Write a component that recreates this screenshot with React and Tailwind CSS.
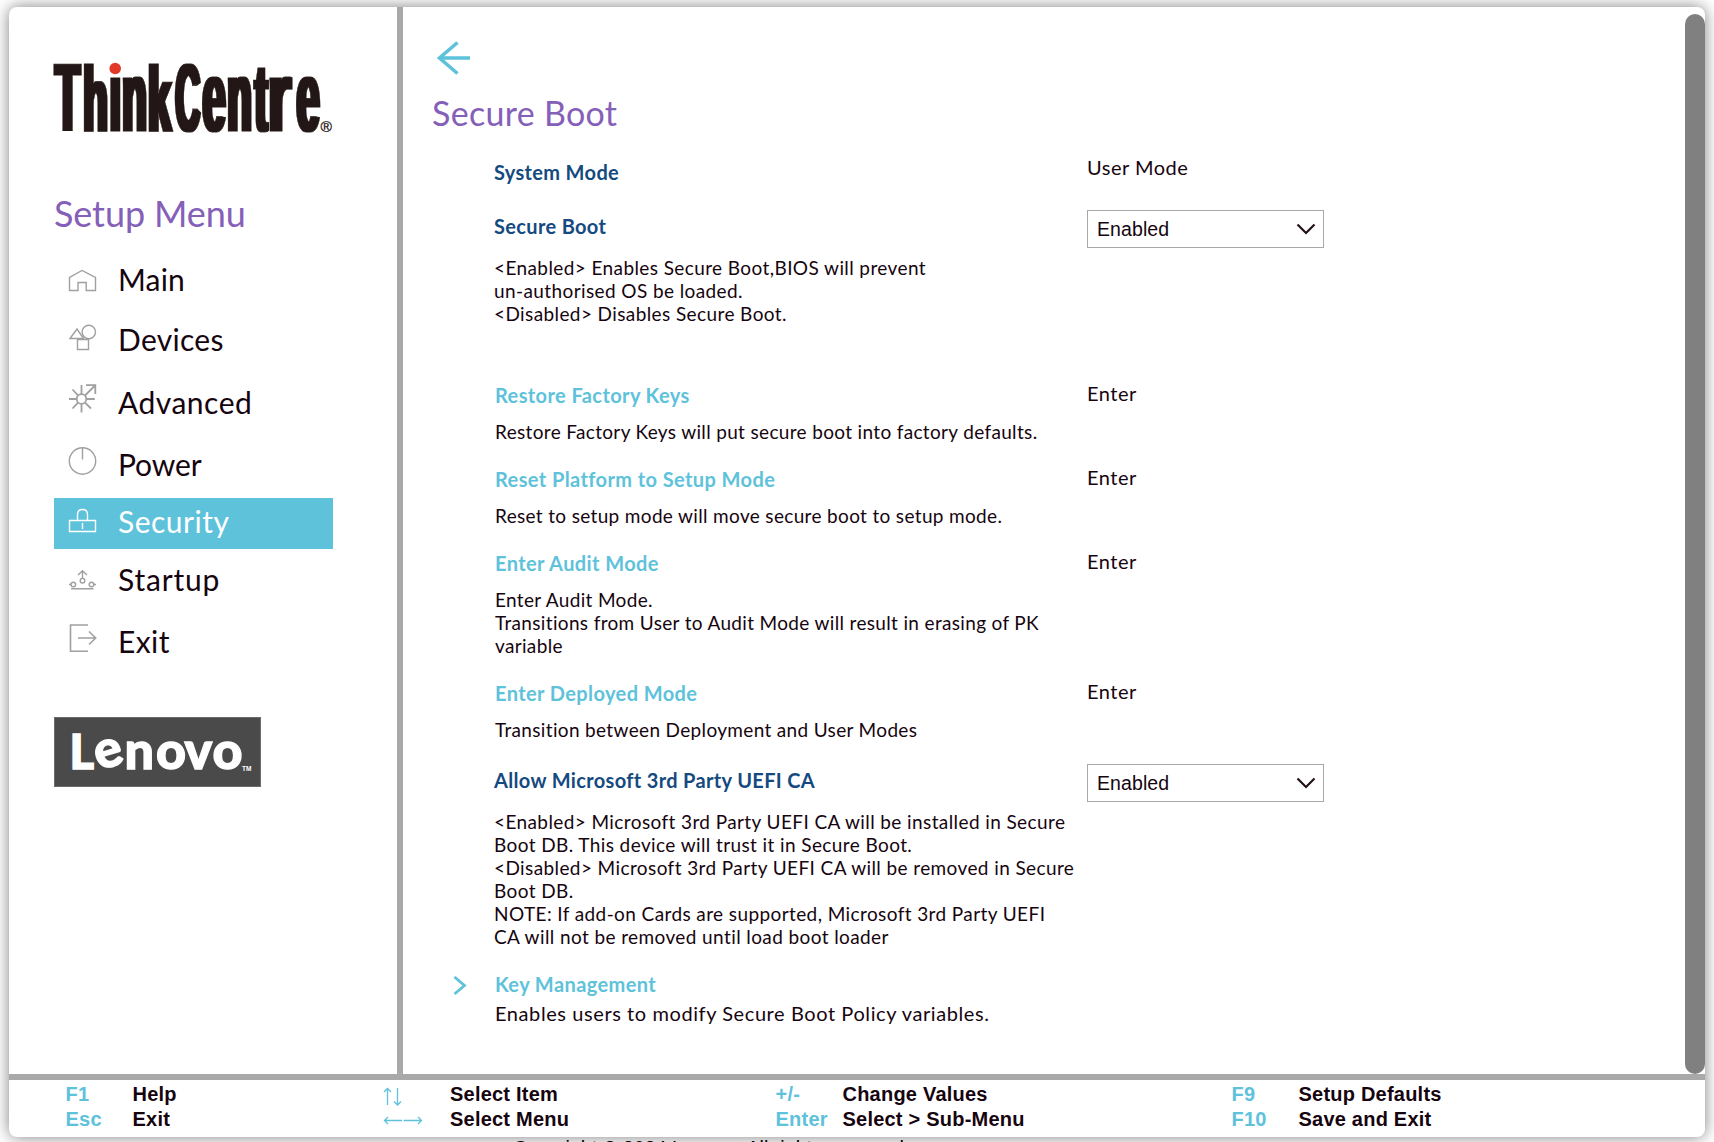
import React from "react";

const LOGO_BASE = 130.7;
// char, ink left, ink width, font size, glyph bearing (em), glyph ink width (em)
const LOGO = [
  ["T", 54, 27, 97, 0.021, 0.569],
  ["h", 84, 23, 92, 0.07, 0.474],
  ["i", 110.5, 9.5, 101, 0.07, 0.137],
  ["n", 123, 23, 100, 0.07, 0.474],
  ["k", 149, 24, 92, 0.07, 0.48],
  ["C", 175, 25, 96, 0.045, 0.62],
  ["e", 202, 24, 100, 0.037, 0.482],
  ["n", 228, 23, 100, 0.07, 0.474],
  ["t", 253.5, 15.5, 97, 0.02, 0.297],
  ["r", 270, 23.5, 100, 0.07, 0.325],
  ["e", 296, 24, 100, 0.037, 0.482],
];

function ThinkCentreLogo() {
  return (
    <svg className="block h-[80px] w-[284px] overflow-visible" viewBox="52 59 284 80">
      <defs>
        <filter id="widen" x="-5%" y="-5%" width="110%" height="110%">
          <feMorphology operator="dilate" radius="2 0" />
        </filter>
      </defs>
      <g filter="url(#widen)" fill="#231815" stroke="#231815" strokeWidth="0.8" fontFamily="'Liberation Sans', sans-serif" fontWeight="700">
        {LOGO.map(([ch, left, width, size, lsb, ink], i) => {
          const sx = (width - 4) / (ink * size);
          return (
            <text key={i} fontSize={size} transform={`translate(${left + 2 - lsb * size * sx} ${LOGO_BASE}) scale(${sx} 1)`}>
              {ch}
            </text>
          );
        })}
      </g>
      <rect x="108.5" y="55" width="13.5" height="20.5" fill="#fff" />
      <circle cx="115.2" cy="68.5" r="5.8" fill="#e0392a" />
      <text x="320.5" y="132" fontSize="15.5" fill="#231815" stroke="#231815" strokeWidth="0.3" fontFamily="'Liberation Sans', sans-serif">®</text>
    </svg>
  );
}

function LenovoLogo() {
  return (
    <svg className="block h-[70px] w-[207px] border border-[#6b6b6b] bg-[#4a4a4a]" viewBox="55 718 205 68">
      <g fill="#fff" fontFamily="Lato, sans-serif" fontWeight="900">
        <text y="769.5" fontSize="52" stroke="#fff" strokeWidth="1.3">
          <tspan x="69.5" y="768.5" fontSize="47">L</tspan>
          <tspan x="99" y="770.5" rotate="-17">e</tspan>
          <tspan x="124.5" y="768.5">n</tspan>
          <tspan x="156">o</tspan>
          <tspan x="184.5">v</tspan>
          <tspan x="212.5">o</tspan>
        </text>
        <text x="242" y="770.5" fontSize="6.5" fontWeight="700" fontFamily="'Liberation Sans', sans-serif">TM</text>
      </g>
    </svg>
  );
}

const ICONS = {
  Main: ["68 262 30 36", <path key="a" d="M69.5 290.5V277.5L82 270.5L95.5 277.5V290.5H86.2V282.5H78V290.5Z" />],
  Devices: [
    "68 321 30 36",
    <g key="a">
      <path d="M70 338.5L77 329L83.500 338.500Z" />
      <circle cx="88.800" cy="332" r="6.700" />
      <path d="M77.500 339.500H88.500V349.500H77.500Z" />
    </g>,
  ],
  Advanced: [
    "68 383 30 36",
    <g key="a" strokeWidth="1.8">
      <circle cx="81.5" cy="399" r="4.800" />
      <path d="M81.500 385V394M81.500 404V412.500M69 399H76.500M86.500 399H94.800M72.500 389.500L78 395.300M78 402.600L72.500 408.500M85 402.600L91 408.500M85 395.500L95 385.500M86 385.200H95.300V394" />
    </g>,
  ],
  Power: [
    "68 445 30 36",
    <g key="a">
      <circle cx="82.500" cy="461" r="13.200" />
      <path d="M82.500 448V459.500" />
    </g>,
  ],
  Security: [
    "68 502 30 36",
    <path key="a" d="M69.500 520.500H95.500V531.500H69.500ZM77.500 520.500V514.500Q77.500 509.500 82.500 509.500Q87.500 509.500 87.500 514.500V520.500M82.500 523V529" />,
  ],
  Startup: [
    "68 560 30 36",
    <g key="a">
      <circle cx="73.300" cy="584.500" r="2.300" />
      <circle cx="82.500" cy="580.700" r="2.300" />
      <circle cx="91.500" cy="584.500" r="2.300" />
      <path d="M82.500 578.500V571M78 575L82.500 570.700L87 575M69 584.500H71M94 584.500H96M71 588.700H93.500" />
    </g>,
  ],
  Exit: ["68 622 30 36", <path key="a" strokeWidth="1.600" d="M88 625H70.500V651.300H88M78 638H95.500M89 631.500L95.700 638L89 644.500" />],
};

function MenuItem({ name, cls, labelCls, active }) {
  const [box, art] = ICONS[name];
  return (
    <li className={`flex items-start gap-5 pl-3.5 ${cls} ${active ? "bg-[#5ec2db] text-white" : "text-[#16050f]"}`}>
      <svg className="h-9 w-[30px] shrink-0" viewBox={box} fill="none" stroke={active ? "#fff" : "#a0a0a0"} strokeWidth="1.4">
        {art}
      </svg>
      <span className={`text-[30px] leading-9 ${labelCls}`}>{name}</span>
    </li>
  );
}

function Sidebar() {
  return (
    <aside className="flex w-[394px] shrink-0 flex-col border-r-[6px] border-[#a9a9a9] pl-[45px]">
      <div className="-ml-0.5 mt-[52px]">
        <ThinkCentreLogo />
      </div>
      <h1 className="mt-[52px] text-[36px] leading-[44px] tracking-[-0.1px] text-[#8560b8]">Setup Menu</h1>
      <ul className="mt-[27px] w-[279px]">
        <MenuItem name="Main" cls="h-[59px]" labelCls="-mt-px tracking-[0.2px]" />
        <MenuItem name="Devices" cls="h-[62px]" labelCls="tracking-[0.3px]" />
        <MenuItem name="Advanced" cls="h-[62px]" labelCls="mt-px tracking-[0.5px]" />
        <MenuItem name="Power" cls="h-[53px]" labelCls="mt-px tracking-[-0.1px]" />
        <MenuItem name="Security" cls="h-[51px] pt-1" labelCls="mt-px tracking-[0.5px]" active />
        <MenuItem name="Startup" cls="h-[73px] pt-[11px]" labelCls="mt-px tracking-[0.8px]" />
        <MenuItem name="Exit" cls="h-[95px]" labelCls="mt-px tracking-[0.4px]" />
      </ul>
      <LenovoLogo />
    </aside>
  );
}

function Select({ value }) {
  return (
    <button className="-mt-1 flex h-[38px] w-[237px] items-center justify-between border border-[#a9a9a9] bg-white pl-[9px] pr-[7px] font-['Liberation_Sans',sans-serif] text-[19.5px] tracking-[0.1px]">
      <span className="pt-px">{value}</span>
      <svg className="h-3 w-5" viewBox="0 0 20 12" fill="none" stroke="#231018" strokeWidth="2.2">
        <path d="M1.500 1.500L10 10L18.500 1.500" />
      </svg>
    </button>
  );
}

function Row({ title, link, cls, value, select, valueCls = "-mt-0.5", descCls = "mt-[13px] text-[19px] leading-[23px] tracking-[0.34px]", lines }) {
  return (
    <section className={`grid grid-cols-[593px_1fr] items-start ${cls}`}>
      <div className={link ? "pl-px" : ""}>
        <h3 className={`text-[20px] font-bold leading-6 ${link ? "tracking-[0.4px] text-[#5ec2db]" : "tracking-[0.34px] text-[#154a80]"}`}>{title}</h3>
        {lines && (
          <p className={`whitespace-nowrap ${descCls}`}>
            {lines.map((l, i) => (
              <React.Fragment key={i}>
                {i > 0 && <br />}
                {l}
              </React.Fragment>
            ))}
          </p>
        )}
      </div>
      {select ? <Select value={value} /> : <span className={`text-[20px] leading-6 tracking-[0.5px] ${valueCls}`}>{value}</span>}
    </section>
  );
}

const WIDE_DESC = "mt-[18px] text-[19px] leading-[23px] tracking-[0.4px]";

function Content() {
  return (
    <main className="flex flex-1 flex-col">
      <svg className="ml-[33px] mt-[33px] block h-9 w-9" viewBox="436 40 36 36" fill="none" stroke="#5ec2db" strokeWidth="3.600">
        <path d="M470 58H440M457.500 42.500L439.500 58L457.500 73.500" />
      </svg>
      <h2 className="ml-[29px] mt-[17px] text-[34px] leading-10 tracking-[0.3px] text-[#8560b8]">Secure Boot</h2>
      <div className="ml-[91px] mt-[27px]">
        <Row title="System Mode" cls="h-[54px]" value="User Mode" valueCls="-mt-[5px]" />
        <Row
          title="Secure Boot"
          cls="h-[169px]"
          value="Enabled"
          select
          descCls={WIDE_DESC}
          lines={["<Enabled> Enables Secure Boot,BIOS will prevent", "un-authorised OS be loaded.", "<Disabled> Disables Secure Boot."]}
        />
        <Row link title="Restore Factory Keys" cls="h-[84px]" value="Enter" lines={["Restore Factory Keys will put secure boot into factory defaults."]} />
        <Row link title="Reset Platform to Setup Mode" cls="h-[84px]" value="Enter" lines={["Reset to setup mode will move secure boot to setup mode."]} />
        <Row
          link
          title="Enter Audit Mode"
          cls="h-[130px]"
          value="Enter"
          lines={["Enter Audit Mode.", "Transitions from User to Audit Mode will result in erasing of PK", "variable"]}
        />
        <Row link title="Enter Deployed Mode" cls="h-[87px]" value="Enter" lines={["Transition between Deployment and User Modes"]} />
        <Row
          title="Allow Microsoft 3rd Party UEFI CA"
          cls="h-[204px]"
          value="Enabled"
          select
          descCls={WIDE_DESC}
          lines={[
            "<Enabled> Microsoft 3rd Party UEFI CA will be installed in Secure",
            "Boot DB. This device will trust it in Secure Boot.",
            "<Disabled> Microsoft 3rd Party UEFI CA will be removed in Secure",
            "Boot DB.",
            "NOTE: If add-on Cards are supported, Microsoft 3rd Party UEFI",
            "CA will not be removed until load boot loader",
          ]}
        />
        <div className="-ml-[41px] flex items-start">
          <svg className="mt-1 h-5 w-[41px] shrink-0" viewBox="453 976 41 20" fill="none" stroke="#5ec2db" strokeWidth="2.800">
            <path d="M454.500 977L464.500 985.500L454.500 994" />
          </svg>
          <Row
            link
            title="Key Management"
            cls="flex-1"
            descCls="mt-[5px] text-[20px] leading-6 tracking-[0.58px]"
            lines={["Enables users to modify Secure Boot Policy variables."]}
          />
        </div>
      </div>
    </main>
  );
}

const Arrow = ({ d, cls, box }) => (
  <svg className={cls} viewBox={box} fill="none" stroke="#5ec2db" strokeWidth="1.300">
    <path d={d} />
  </svg>
);

const HELP = [
  { cls: "w-[317.500px]", items: [["F1", "Help"], ["Esc", "Exit"]] },
  {
    cls: "w-[392.500px]",
    items: [
      [<Arrow key="v" cls="mt-1 h-5 w-5" box="0 0 20 20" d="M4.500 18V1.500M1 5L4.500 1.500L8 5M14.500 1V18M11 14.500L14.500 18L18 14.500" />, "Select Item"],
      [<Arrow key="h" cls="h-3 w-10" box="0 0 40 12" d="M19 6.500H1.500M5 3L1.500 6.500L5 10M20.500 6.500H38.500M35 3L38.500 6.500L35 10" />, "Select Menu"],
    ],
  },
  { cls: "w-[456px]", items: [["+/-", "Change Values"], ["Enter", "Select > Sub-Menu"]] },
  { cls: "", items: [["F9", "Setup Defaults"], ["F10", "Save and Exit"]] },
];

function HelpBar() {
  return (
    <footer className="flex h-[63px] border-t-[6px] border-[#a9a9a9] pl-[56.500px] pt-0.5 font-['Liberation_Sans',sans-serif] text-[20px] font-bold leading-[25px] tracking-[0.22px]">
      {HELP.map((col, i) => (
        <div key={i} className={`shrink-0 ${col.cls}`}>
          {col.items.map(([k, label]) => (
            <div key={label} className="flex h-[25px] whitespace-nowrap">
              <span className="flex w-[67px] shrink-0 items-center text-[#5ec2db]">{k}</span>
              <span>{label}</span>
            </div>
          ))}
        </div>
      ))}
    </footer>
  );
}

export default function App() {
  return (
    <div className="h-[1142px] w-[1714px] overflow-hidden bg-white pl-[9px] pt-[7px] font-[Lato,sans-serif] text-[#16050f]">
      <div className="flex h-[1130px] w-[1696px] flex-col overflow-hidden rounded-[8px] bg-white shadow-[0_0_16px_rgba(0,0,0,0.5)]">
        <div className="flex h-[1067px]">
          <Sidebar />
          <Content />
          <div className="mt-[7px] w-5 shrink-0 rounded-full bg-[#808080]" />
        </div>
        <HelpBar />
      </div>
      <p className="ml-[504px] mt-px whitespace-nowrap font-['Liberation_Sans',sans-serif] text-[19.700px] leading-5 text-black">
        Copyright © 2024 Lenovo. All rights reserved.
      </p>
    </div>
  );
}
